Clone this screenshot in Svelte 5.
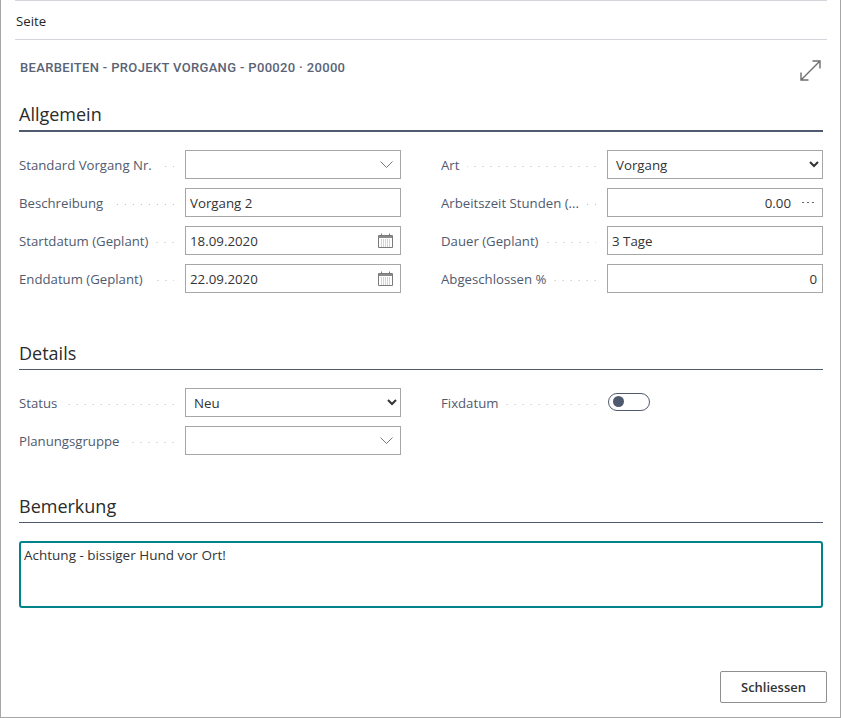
<script>
  const allgemeinLeft = [
    { label: 'Standard Vorgang Nr.', kind: 'lookup', value: '' },
    { label: 'Beschreibung', kind: 'text', value: 'Vorgang 2' },
    { label: 'Startdatum (Geplant)', kind: 'date', value: '18.09.2020' },
    { label: 'Enddatum (Geplant)', kind: 'date', value: '22.09.2020' }
  ];
  const allgemeinRight = [
    { label: 'Art', kind: 'select', value: 'Vorgang' },
    { label: 'Arbeitszeit Stunden (...', kind: 'assist', value: '0.00' },
    { label: 'Dauer (Geplant)', kind: 'text', value: '3 Tage' },
    { label: 'Abgeschlossen %', kind: 'number', value: '0' }
  ];
  const detailsLeft = [
    { label: 'Status', kind: 'select', value: 'Neu' },
    { label: 'Planungsgruppe', kind: 'lookup', value: '' }
  ];
  const detailsRight = [{ label: 'Fixdatum', kind: 'toggle', value: '' }];
</script>

{#snippet field(f)}
  <div class="row">
    <label class="lbl">
      <span class="lbl-text">{f.label}</span>
      <span class="dots"></span>
    </label>
    {#if f.kind === 'select'}
      <select class="ctl sel">
        <option>{f.value}</option>
      </select>
    {:else if f.kind === 'toggle'}
      <span class="toggle"><span class="knob"></span></span>
    {:else}
      <div class="ctl box">
        <input
          class="inp"
          class:num={f.kind === 'number' || f.kind === 'assist'}
          class:assist={f.kind === 'assist'}
          value={f.value}
          readonly
        />
        {#if f.kind === 'lookup'}
          <svg class="ico" width="13" height="7" viewBox="0 0 13 7" aria-hidden="true">
            <path d="M.5.5l6 6 6-6" fill="none" stroke="#777" stroke-width="1" />
          </svg>
        {:else if f.kind === 'date'}
          <svg class="ico" width="15" height="15" viewBox="0 0 15 15" aria-hidden="true">
            <path d="M.5 2.5h14v12H.5z" fill="#fff" stroke="#7a7a7a" />
            <path d="M1 3h13v2H1z" fill="#8a8a8a" />
            <path d="M3.5 .5v2.5M11.5 .5v2.5" stroke="#7a7a7a" />
            <path d="M3 7h9M3 9h9M3 11h9M3 13h9" stroke="#a8a8a8" stroke-dasharray="1 1" />
          </svg>
        {:else if f.kind === 'assist'}
          <svg class="ico" width="13" height="3" viewBox="0 0 13 3" aria-hidden="true">
            <path d="M0 1h2v1H0zM5 1h2v1H5zM10 1h2v1h-2z" fill="#666" />
          </svg>
        {/if}
      </div>
    {/if}
  </div>
{/snippet}

<div class="dialog">
  <div class="menu">Seite</div>

  <div class="caption">
    <h1>BEARBEITEN - PROJEKT VORGANG - P00020 · 20000</h1>
    <svg class="expand" width="21" height="21" viewBox="0 0 21 21" aria-hidden="true">
      <path d="M1 20L20 1M12.5 1H20v7.5M1 12.5V20h7.5" fill="none" stroke="#6e6e6e" stroke-width="1.4" />
    </svg>
  </div>

  <section class="first">
    <h2 class="thick">Allgemein</h2>
    <div class="cols">
      <div class="col">
        {#each allgemeinLeft as f}{@render field(f)}{/each}
      </div>
      <div class="col">
        {#each allgemeinRight as f}{@render field(f)}{/each}
      </div>
    </div>
  </section>

  <section class="second">
    <h2>Details</h2>
    <div class="cols">
      <div class="col">
        {#each detailsLeft as f}{@render field(f)}{/each}
      </div>
      <div class="col">
        {#each detailsRight as f}{@render field(f)}{/each}
      </div>
    </div>
  </section>

  <section class="third">
    <h2>Bemerkung</h2>
    <textarea class="note" readonly>Achtung - bissiger Hund vor Ort!</textarea>
  </section>

  <div class="footer">
    <button class="close">Schliessen</button>
  </div>
</div>

<style>
  :global(body) {
    margin: 0;
    background: #fff;
  }
  .dialog {
    box-sizing: border-box;
    width: 841px;
    height: 718px;
    border-left: 1px solid #a6a6a6;
    border-right: 1px solid #a6a6a6;
    border-bottom: 1px solid #a6a6a6;
    display: flex;
    flex-direction: column;
    font-family: "Open Sans", "Liberation Sans", sans-serif;
    font-size: 13.2px;
    color: #333;
  }
  .menu {
    margin: 0 13px 0 14px;
    box-sizing: border-box;
    height: 40px;
    border-top: 1px solid #d3d6da;
    border-bottom: 1px solid #d3d6da;
    padding: 11px 0 0 1px;
    line-height: 18px;
    color: #262626;
  }
  .caption {
    margin: 0 17px 0 18px;
    height: 60px;
    display: flex;
    justify-content: space-between;
  }
  h1 {
    margin: 19px 0 0 1px;
    font: 500 13px/18px Roboto, "Liberation Sans", sans-serif;
    letter-spacing: 0.34px;
    color: #5a6376;
  }
  .expand {
    margin-top: 20px;
    margin-right: 2px;
  }
  section {
    margin: 0 17px 0 18px;
  }
  .first { margin-top: 1px; }
  .second { margin-top: 47px; }
  .third { margin-top: 38px; }
  h2 {
    margin: 0;
    height: 30px;
    box-sizing: border-box;
    border-bottom: 1px solid #505a6e;
    font-size: 18px;
    font-weight: 500;
    line-height: 26px;
    color: #2b2b2b;
  }
  h2.thick {
    border-bottom-width: 2px;
    height: 31px;
  }
  .cols {
    display: grid;
    grid-template-columns: 382px 382px;
    column-gap: 40px;
    margin-top: 18px;
  }
  .col {
    display: flex;
    flex-direction: column;
    gap: 9px;
  }
  .row {
    display: flex;
    align-items: center;
    height: 29px;
  }
  .lbl {
    width: 155px;
    margin-right: 11px;
    display: flex;
    align-items: center;
    padding-top: 1px;
    color: #505a6e;
    white-space: nowrap;
    overflow: hidden;
  }
  .dots {
    flex: 1;
    min-width: 0;
    margin-left: 8px;
    margin-top: 3px;
    height: 1px;
    background-image: linear-gradient(to left, #b5b9c0 1px, transparent 1px);
    background-size: 8px 1px;
    background-position: right top;
  }
  .ctl {
    box-sizing: border-box;
    width: 216px;
    height: 29px;
    border: 1px solid #a6a6a6;
    background: #fff;
    font-family: inherit;
    font-size: 13.3px;
    color: #333;
  }
  .box {
    display: flex;
    align-items: center;
  }
  .inp {
    flex: 1;
    min-width: 0;
    height: 100%;
    box-sizing: border-box;
    border: 0;
    outline: 0;
    padding: 1px 4px 0;
    background: transparent;
    font: inherit;
    color: inherit;
  }
  .num {
    text-align: right;
    padding-right: 5px;
  }
  .assist {
    padding-right: 11px;
  }
  .ico {
    flex: none;
    margin-right: 7px;
  }
  .sel {
    padding: 1px 4px 0;
    border-radius: 0;
    outline: 0;
  }
  .toggle {
    box-sizing: border-box;
    display: flex;
    align-items: center;
    width: 42px;
    height: 18px;
    margin: -2px 0 0 1px;
    border: 1px solid #505a6e;
    border-radius: 9px;
    padding-left: 4px;
  }
  .knob {
    width: 11px;
    height: 11px;
    border-radius: 50%;
    background: #505a6e;
  }
  .note {
    display: block;
    box-sizing: border-box;
    width: 804px;
    height: 67px;
    margin: 18px 0 0;
    padding: 3px 3px;
    border: 2px solid #008489;
    border-radius: 3px;
    outline: 0;
    resize: none;
    font: inherit;
    font-size: 13.5px;
    line-height: 18px;
    color: #333;
  }
  .footer {
    margin-top: auto;
    padding: 0 13px 14px 0;
    display: flex;
    justify-content: flex-end;
  }
  .close {
    box-sizing: border-box;
    width: 107px;
    height: 32px;
    border: 1px solid #8f8f8f;
    border-radius: 2px;
    background: #fff;
    font: 600 13px "Open Sans", "Liberation Sans", sans-serif;
    color: #333;
  }
</style>
